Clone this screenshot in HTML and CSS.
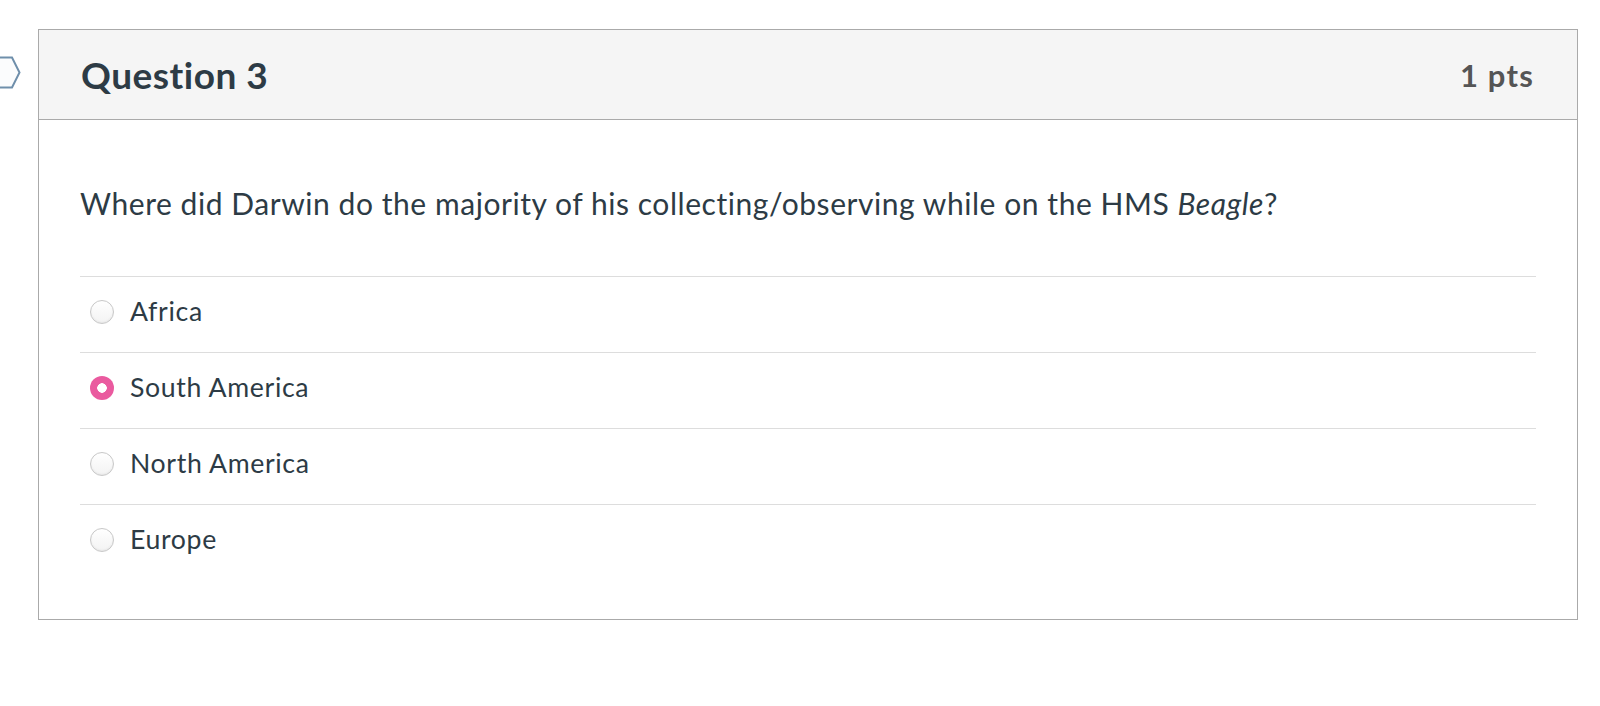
FILE: index.html
```html
<!DOCTYPE html>
<html lang="en">
<head>
<meta charset="utf-8">
<title>Question 3</title>
<link rel="stylesheet" href="styles.css">
</head>
<body>
<div class="page">
  <div class="question-wrap">
    <svg class="flag" width="22" height="34" viewBox="0 0 22 34" aria-hidden="true">
      <polygon points="-10,1.5 12,1.5 19.5,16.5 12,31.5 -10,31.5" fill="#fbfcfd" stroke="#6f8fab" stroke-width="2" stroke-linejoin="miter"/>
    </svg>
    <div class="question">
      <div class="q-header">
        <h2 class="q-title">Question 3</h2>
        <span class="q-points">1 pts</span>
      </div>
      <div class="q-body">
        <p class="q-text">Where did Darwin do the majority of his collecting/observing while on the HMS <em>Beagle</em>?</p>
        <div class="answers">
          <label class="answer"><span class="radio"></span><span class="answer-text">Africa</span></label>
          <label class="answer"><span class="radio checked"></span><span class="answer-text">South America</span></label>
          <label class="answer"><span class="radio"></span><span class="answer-text">North America</span></label>
          <label class="answer"><span class="radio"></span><span class="answer-text">Europe</span></label>
        </div>
      </div>
    </div>
  </div>
</div>
</body>
</html>
```

FILE: styles.css
```css
html, body {
  margin: 0;
  padding: 0;
  background: #ffffff;
}

body {
  font-family: Lato, "Liberation Sans", sans-serif;
  color: #2d3b45;
}

.page {
  padding: 29px 22px 0 38px;
}

.question-wrap {
  position: relative;
  width: 1540px;
}

.flag {
  position: absolute;
  left: -38px;
  top: 27px;
}

.question {
  border: 1px solid #aaaaaa;
  background: #ffffff;
}

.q-header {
  display: flex;
  align-items: center;
  justify-content: space-between;
  box-sizing: border-box;
  height: 90px;
  padding: 0 43px 0 42px;
  background: #f5f5f5;
  border-bottom: 1px solid #aaaaaa;
}

.q-title {
  margin: 0;
  padding-top: 1px;
  font-size: 37px;
  font-weight: 700;
  line-height: 44px;
  letter-spacing: 0.5px;
  color: #2d3b45;
}

.q-points {
  font-size: 31px;
  font-weight: 700;
  line-height: 36px;
  letter-spacing: 1.2px;
  color: #555555;
}

.q-body {
  padding: 65px 41px 39px 41px;
}

.q-text {
  margin: 0 0 55px 0;
  font-size: 30px;
  line-height: 36px;
  letter-spacing: 0.55px;
}

.q-text em {
  font-style: italic;
}

.answers {
  display: flex;
  flex-direction: column;
}

.answer {
  display: flex;
  align-items: flex-start;
  gap: 16px;
  padding: 18px 0 25px 10px;
  border-top: 1px solid #dddddd;
  font-size: 26.67px;
  line-height: 32px;
  letter-spacing: 0.65px;
}

.radio {
  flex: none;
  width: 24px;
  height: 24px;
  margin-top: 5px;
  box-sizing: border-box;
  border-radius: 50%;
  border: 1px solid #c8c8c8;
  background: linear-gradient(#ffffff, #f3f3f3);
  box-shadow: inset 0 -1px 2px rgba(0, 0, 0, 0.06);
}

.radio.checked {
  border: none;
  background: radial-gradient(circle at 50% 50%, #ffffff 0 4.5px, #ea5a9f 5px);
  box-shadow: none;
}

.answer-text {
  color: #2d3b45;
}
```
